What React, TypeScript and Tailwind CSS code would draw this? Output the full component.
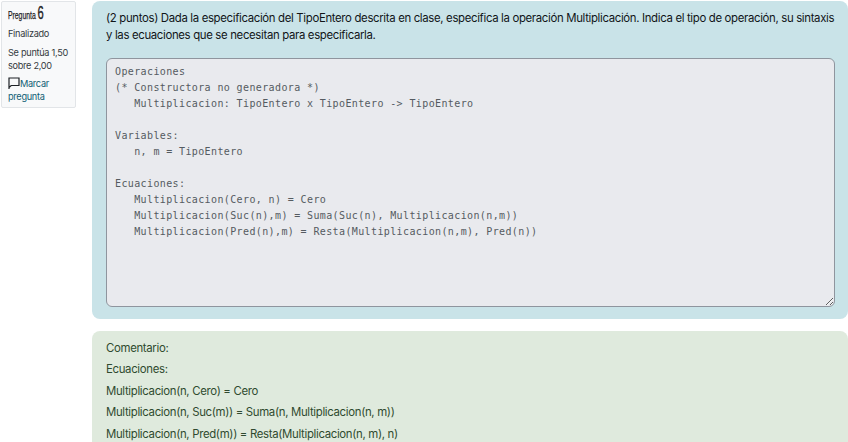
const code = `Operaciones
(* Constructora no generadora *)
   Multiplicacion: TipoEntero x TipoEntero -> TipoEntero

Variables:
   n, m = TipoEntero

Ecuaciones:
   Multiplicacion(Cero, n) = Cero
   Multiplicacion(Suc(n),m) = Suma(Suc(n), Multiplicacion(n,m))
   Multiplicacion(Pred(n),m) = Resta(Multiplicacion(n,m), Pred(n))`;

function FlagIcon() {
  return (
    <svg viewBox="0 0 12 12" className="inline-block w-[12px] h-[12px] align-[-2px] text-[#1d2125]" fill="none" stroke="currentColor" strokeWidth="1.2">
      <path d="M1 12V1h10v7.5H3.2L1 10.5" />
    </svg>
  );
}

export default function App() {
  return (
    <div className="w-[848px] h-[442px] overflow-hidden bg-white flex items-start gap-[16px] pt-px pl-px font-['Inter',sans-serif] text-[#1d2125]">
      <aside className="w-[75px] shrink-0 h-[107px] bg-[#f8f9fa] border border-[#e2e5e8] rounded-[2px] pl-[6px] pt-[5px] text-[9.2px] tracking-[-0.3px] leading-[13px] text-[#343a40]">
        <h3 className="h-[18px] whitespace-nowrap origin-left scale-x-[0.62] tracking-normal font-['Liberation_Sans',sans-serif] text-[#1d2125]">
          <span className="text-[11px] font-normal [-webkit-text-stroke:0.25px_#1d2125]">Pregunta </span>
          <span className="text-[18px] font-normal [-webkit-text-stroke:0.4px_#1d2125]">6</span>
        </h3>
        <p className="mt-[2px]">Finalizado</p>
        <p className="mt-[6px]">Se puntúa 1,50 sobre 2,00</p>
        <p className="mt-[5px] pr-2">
          <a className="text-[#115f75]">
            <FlagIcon />Marcar pregunta
          </a>
        </p>
      </aside>
      <main className="flex-1 min-w-0 flex flex-col gap-[12px]">
        <section className="h-[318px] bg-[#c9e3e8] rounded-[8px] pl-[14px] pr-[6px] pt-[9px] pb-[12px] flex flex-col">
          <p className="text-[11.4px] tracking-[-0.34px] leading-[17px] text-[#111518]">
            (2 puntos) Dada la especificación del TipoEntero descrita en clase, especifica la operación Multiplicación. Indica el tipo de operación, su sintaxis y las ecuaciones que se necesitan para especificarla.
          </p>
          <textarea
            readOnly
            defaultValue={code}
            className="mt-[14px] w-[729px] h-[249px] bg-[#e9eaee] border border-[#8f959e] rounded-[6px] px-[8px] pt-[4.5px] font-['DejaVu_Sans_Mono',monospace] text-[10px] tracking-[0.38px] leading-[16px] text-[#555b61] outline-none"
          />
        </section>
        <section className="h-[130px] bg-[#dfeadd] rounded-[8px] px-[14px] pt-[7.5px] text-[#2f4a2f] text-[11.4px] tracking-[-0.33px] leading-[19px] flex flex-col gap-[2.5px]">
          <p>Comentario:</p>
          <p>Ecuaciones:</p>
          <p>Multiplicacion(n, Cero) = Cero</p>
          <p>Multiplicacion(n, Suc(m)) = Suma(n, Multiplicacion(n, m))</p>
          <p>Multiplicacion(n, Pred(m)) = Resta(Multiplicacion(n, m), n)</p>
        </section>
      </main>
    </div>
  );
}
